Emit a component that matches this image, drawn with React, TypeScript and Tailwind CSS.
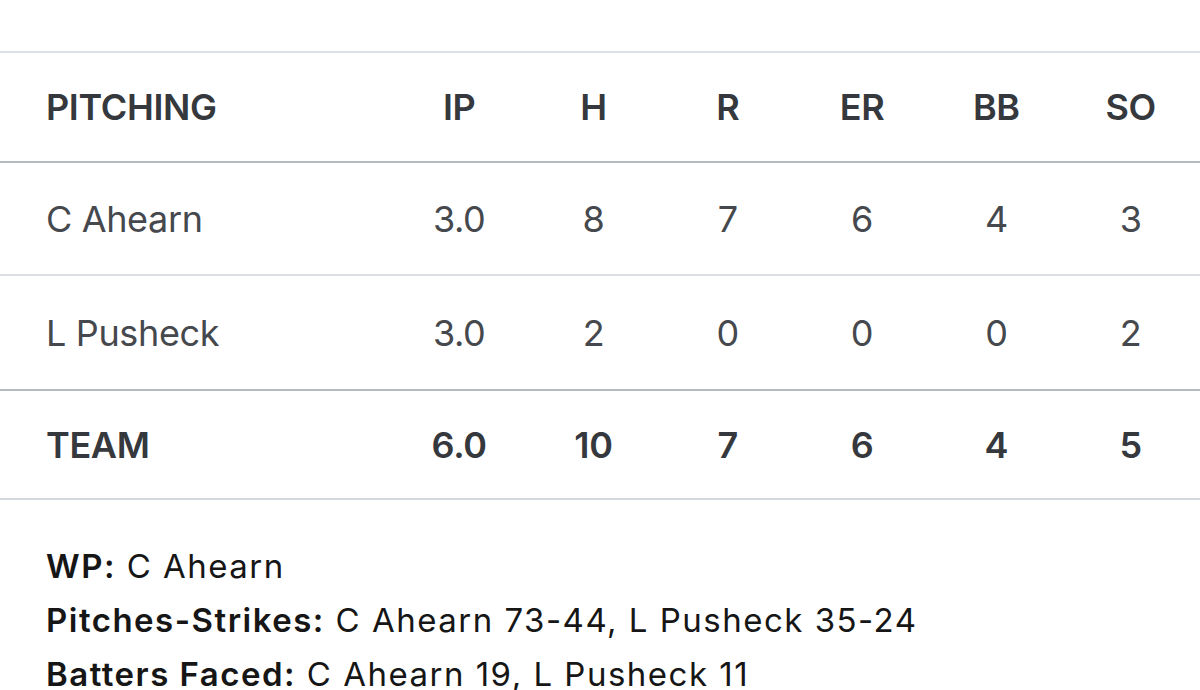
const cols = ["IP", "H", "R", "ER", "BB", "SO"];

const rows = [
	{ name: "C Ahearn", stats: ["3.0", "8", "7", "6", "4", "3"] },
	{ name: "L Pusheck", stats: ["3.0", "2", "0", "0", "0", "2"] },
];

const team = ["6.0", "10", "7", "6", "4", "5"];

const Row = ({
	label,
	values,
	className,
	bold,
}: {
	label: string;
	values: string[];
	className: string;
	bold?: boolean;
}) => (
	<div className={`flex items-center ${className}`}>
		<div
			className={`flex-1 pl-[46px] ${bold ? "font-semibold text-[#35383d]" : "text-[#45484d]"}`}
		>
			{label}
		</div>
		<div className="flex w-[808px] pr-[2px]">
			{values.map((v, i) => (
				<div
					key={i}
					className={`w-[134.3px] text-center ${bold ? "font-semibold text-[#35383d]" : "text-[#45484d]"}`}
				>
					{v}
				</div>
			))}
		</div>
	</div>
);

export default function App() {
	return (
		<div className="w-[1200px] h-[690px] overflow-hidden bg-white font-['Inter',sans-serif] text-[36px] tracking-[-0.01em]">
			<div className="h-[51px]" />
			<div className="border-t-2 border-[#dde2e7]">
				<Row label="PITCHING" values={cols} bold className="h-[110px] border-b-2 border-[#b4bbc3]" />
				{rows.map((r, i) => (
					<Row
						key={r.name}
						label={r.name}
						values={r.stats}
						className={
							i === 0
								? "h-[113px] border-b-2 border-[#dadee3]"
								: "h-[115px] border-b-2 border-[#b4bbc3]"
						}
					/>
				))}
				<Row label="TEAM" values={team} bold className="h-[109px] border-b-2 border-[#d3d8de]" />
			</div>
			<div className="pl-[46px] pt-[39px] text-[33px] tracking-[0.045em] leading-[54px] text-[#161616]">
				<div>
					<span className="font-semibold">WP:</span> C Ahearn
				</div>
				<div>
					<span className="font-semibold">Pitches-Strikes:</span> C Ahearn 73-44, L Pusheck 35-24
				</div>
				<div>
					<span className="font-semibold">Batters Faced:</span> C Ahearn 19, L Pusheck 11
				</div>
			</div>
		</div>
	);
}
